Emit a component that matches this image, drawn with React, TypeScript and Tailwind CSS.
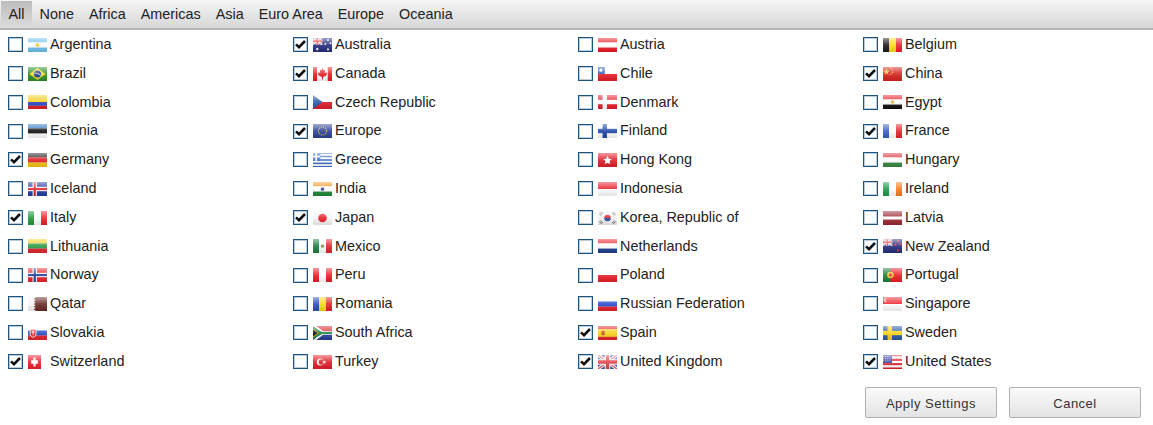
import { type ReactNode } from 'react'

const tabs = ['All', 'None', 'Africa', 'Americas', 'Asia', 'Euro Area', 'Europe', 'Oceania']

// horizontal stripes
const H = (...c: string[]) =>
  c.map((f, i) => <rect key={i} x="0" y={(i * 14) / c.length} width="19" height={14 / c.length + 0.1} fill={f} />)

// vertical stripes
const V = (...c: string[]) =>
  c.map((f, i) => <rect key={i} x={(i * 19) / c.length} y="0" width={19 / c.length + 0.1} height="14" fill={f} />)

const Nordic = (bg: string, cross: string, inner?: string) => (
  <>
    <rect width="19" height="14" fill={bg} />
    <rect x="5" width="4" height="14" fill={cross} />
    <rect y="5" width="19" height="4" fill={cross} />
    {inner && <rect x="6" width="2" height="14" fill={inner} />}
    {inner && <rect y="6" width="19" height="2" fill={inner} />}
  </>
)

const UnionCanton = (w: number, h: number) => (
  <svg x="0" y="0" width={w} height={h} viewBox="0 0 19 14">
    <rect width="19" height="14" fill="#3f50a8" />
    <path d="M0 0L19 14M19 0L0 14" stroke="#fff" strokeWidth="3" />
    <path d="M0 0L19 14M19 0L0 14" stroke="#e4565c" strokeWidth="1" />
    <path d="M9.5 0V14M0 7H19" stroke="#fff" strokeWidth="5" />
    <path d="M9.5 0V14M0 7H19" stroke="#e4464c" strokeWidth="3" />
  </svg>
)

const countries: { name: string; checked?: boolean; width?: number; flag: ReactNode }[] = [
  { name: 'Argentina', flag: <>{H('#6fc0ee', '#fff', '#6fc0ee')}<circle cx="9.5" cy="7" r="1.8" fill="#f2cf4a" /></> },
  { name: 'Australia', checked: true, flag: <><rect width="19" height="14" fill="#27307f" />{UnionCanton(9.5, 7)}<g fill="#e9e9f2"><circle cx="4.7" cy="10.7" r="1.2" /><circle cx="14.5" cy="2.5" r=".9" /><circle cx="12" cy="6" r=".9" /><circle cx="16.7" cy="5.5" r=".9" /><circle cx="14.5" cy="11" r="1" /></g></> },
  { name: 'Austria', flag: H('#ee1c25', '#fff', '#ee1c25') },
  { name: 'Belgium', flag: V('#1c1c1c', '#fbdc1b', '#ee2230') },
  { name: 'Brazil', flag: <><rect width="19" height="14" fill="#2f8f2a" /><path d="M9.5 1.5L17 7L9.5 12.5L2 7Z" fill="#f2da2c" /><circle cx="9.5" cy="7" r="3.2" fill="#26418f" /><path d="M6.5 6.2Q9.5 6 12.4 8" stroke="#fff" strokeWidth=".7" fill="none" /></> },
  { name: 'Canada', checked: true, flag: <>{V('#ec1c24', '#fff', '#fff', '#ec1c24')}<path d="M9.5 1.5L10.6 3.8L12 3.2L11.5 6.2L13.3 5.3L13.6 7.3L12.3 8.9L10 9.8V12H9V9.8L6.7 8.9L5.4 7.3L5.7 5.3L7.5 6.2L7 3.2L8.4 3.8Z" fill="#e3232b" /></> },
  { name: 'Chile', flag: <>{H('#fff', '#ea2029')}<rect width="7" height="7" fill="#2a5fbf" /><circle cx="3.5" cy="3.5" r="1.4" fill="#fff" /></> },
  { name: 'China', checked: true, flag: <><rect width="19" height="14" fill="#d8241f" /><path d="M4 1.8L4.8 4L7 4.1L5.3 5.4L5.9 7.5L4 6.3L2.1 7.5L2.7 5.4L1 4.1L3.2 4Z" fill="#f5c93a" /><g fill="#f5c93a"><circle cx="8" cy="1.8" r=".6" /><circle cx="9.5" cy="3.4" r=".6" /><circle cx="9.5" cy="5.6" r=".6" /><circle cx="8" cy="7.2" r=".6" /></g></> },
  { name: 'Colombia', flag: <><rect width="19" height="7" fill="#f8cf1e" /><rect y="7" width="19" height="3.5" fill="#2d46c4" /><rect y="10.5" width="19" height="3.5" fill="#e01f2b" /></> },
  { name: 'Czech Republic', flag: <>{H('#fff', '#e0202b')}<path d="M0 0L9.5 7L0 14Z" fill="#2a5ca8" /></> },
  { name: 'Denmark', flag: Nordic('#e8202e', '#fff') },
  { name: 'Egypt', flag: <>{H('#e8222c', '#fff', '#111')}<circle cx="9.5" cy="7" r="1.5" fill="#d9b23c" /></> },
  { name: 'Estonia', flag: H('#2f78c4', '#111', '#fff') },
  { name: 'Europe', checked: true, flag: <><rect width="19" height="14" fill="#2f4499" /><circle cx="9.5" cy="7" r="3.7" fill="none" stroke="#e6c93a" strokeWidth="1" strokeDasharray="1 .95" /></> },
  { name: 'Finland', flag: Nordic('#fff', '#1f49a8') },
  { name: 'France', checked: true, flag: V('#3a63c4', '#fff', '#e8272f') },
  { name: 'Germany', checked: true, flag: H('#222', '#e21d24', '#f5c518') },
  { name: 'Greece', flag: <>{H('#3f6fc9', '#fff', '#3f6fc9', '#fff', '#3f6fc9', '#fff', '#3f6fc9', '#fff', '#3f6fc9')}<rect width="7.5" height="7.8" fill="#3f6fc9" /><rect x="3" width="1.5" height="7.8" fill="#fff" /><rect y="3.1" width="7.5" height="1.5" fill="#fff" /></> },
  { name: 'Hong Kong', flag: <><rect width="19" height="14" fill="#e0202c" /><path d="M9.5 3.2L10.7 5.8L13.5 6.1L11.4 8L12 10.8L9.5 9.4L7 10.8L7.6 8L5.5 6.1L8.3 5.8Z" fill="#fff" /></> },
  { name: 'Hungary', flag: H('#d8323a', '#fff', '#3a8a45') },
  { name: 'Iceland', flag: Nordic('#23409f', '#fff', '#e02a33') },
  { name: 'India', flag: <>{H('#f59a2e', '#fff', '#1f8a3b')}<circle cx="9.5" cy="7" r="1.7" fill="#3a4a9c" /></> },
  { name: 'Indonesia', flag: H('#e4242c', '#fff') },
  { name: 'Ireland', flag: V('#1f9a4b', '#fff', '#f57e28') },
  { name: 'Italy', checked: true, flag: V('#1f9a40', '#fff', '#e9242c') },
  { name: 'Japan', checked: true, flag: <><rect width="19" height="14" fill="#f5f5f5" /><circle cx="9.5" cy="7" r="3.9" fill="#e8202a" /></> },
  { name: 'Korea, Republic of', flag: <><rect width="19" height="14" fill="#f3f3f3" /><path d="M6.5 7A3 3 0 0 1 12.5 7Z" fill="#d9252e" /><path d="M6.5 7A3 3 0 0 0 12.5 7Z" fill="#2a4d9c" /><path d="M2 3.5L4.5 1.5M2.8 4.6L5.3 2.6M14.5 1.5L17 3.5M13.7 2.6L16.2 4.6M2 10.5L4.5 12.5M2.8 9.4L5.3 11.4M14.5 12.5L17 10.5M13.7 11.4L16.2 9.4" stroke="#555" strokeWidth=".7" /></> },
  { name: 'Latvia', flag: <><rect width="19" height="14" fill="#9c2a36" /><rect y="5.6" width="19" height="2.8" fill="#fff" /></> },
  { name: 'Lithuania', flag: H('#f7d31e', '#2f9a45', '#e0262e') },
  { name: 'Mexico', flag: <>{V('#1f7f45', '#fff', '#e0262e')}<circle cx="9.5" cy="7" r="1.7" fill="#a08a5a" /></> },
  { name: 'Netherlands', flag: H('#e8252e', '#fff', '#23408f') },
  { name: 'New Zealand', checked: true, flag: <><rect width="19" height="14" fill="#262f7f" />{UnionCanton(9.5, 7)}<g fill="#e2303a"><circle cx="14.5" cy="2.6" r="1" /><circle cx="12.2" cy="6" r="1" /><circle cx="16.6" cy="5.5" r="1" /><circle cx="14.5" cy="11" r="1.1" /></g></> },
  { name: 'Norway', flag: Nordic('#e8262f', '#fff', '#23409f') },
  { name: 'Peru', flag: V('#ee2029', '#fff', '#ee2029') },
  { name: 'Poland', flag: H('#fff', '#e8232c') },
  { name: 'Portugal', flag: <><rect width="19" height="14" fill="#ee2029" /><rect width="7.6" height="14" fill="#1f8038" /><circle cx="7.6" cy="7" r="3" fill="#eec93a" /><circle cx="7.6" cy="7" r="1.5" fill="#e03a35" /></> },
  { name: 'Qatar', flag: <><rect width="19" height="14" fill="#6a2d26" /><path d="M0 0H6L8 1.2L6 2.3L8 3.5L6 4.7L8 5.8L6 7L8 8.2L6 9.3L8 10.5L6 11.7L8 12.8L6 14H0Z" fill="#f7f5f5" /></> },
  { name: 'Romania', flag: V('#2b4fc0', '#fcd81f', '#e4242c') },
  { name: 'Russian Federation', flag: H('#fff', '#2a4fd0', '#e8232c') },
  { name: 'Singapore', flag: <>{H('#ea2730', '#fff')}<circle cx="4" cy="3.5" r="2" fill="#fff" /><circle cx="4.9" cy="3.5" r="1.9" fill="#ea2730" /></> },
  { name: 'Slovakia', flag: <>{H('#fff', '#2a4dc0', '#e6242c')}<path d="M2.8 3.5H8.2V8Q8.2 10.3 5.5 11Q2.8 10.3 2.8 8Z" fill="#e6242c" stroke="#fff" strokeWidth=".8" /><path d="M5.5 4.5V9M4.2 6H6.8" stroke="#fff" strokeWidth=".8" /></> },
  { name: 'South Africa', flag: <>{H('#e0252c', '#e0252c', '#2b3f99', '#2b3f99')}<path d="M0 0L8.5 7L0 14Z" fill="#111" /><path d="M0 0H3L10 5.4H19V8.6H10L3 14H0L8.5 7Z" fill="#fff" /><path d="M0 1.1L9.3 6H19V8H9.3L0 12.9V11L6.6 7L0 3Z" fill="#1c8a48" /><path d="M0 3L5.8 7L0 11Z" fill="#111" stroke="#eec22f" strokeWidth=".8" /></> },
  { name: 'Spain', checked: true, flag: <>{H('#e8232c', '#f8d21e', '#f8d21e', '#e8232c')}<rect x="4" y="5" width="3" height="4" fill="#c4552d" /></> },
  { name: 'Sweden', flag: Nordic('#2c5aa8', '#f8d21e') },
  { name: 'Switzerland', checked: true, width: 13, flag: <><rect width="19" height="14" fill="#ee2029" /><path d="M8 3H11V5.5H14V8.5H11V11H8V8.5H5V5.5H8Z" fill="#fff" /></> },
  { name: 'Turkey', flag: <><rect width="19" height="14" fill="#e4202a" /><circle cx="7.5" cy="7" r="3.2" fill="#fff" /><circle cx="8.5" cy="7" r="2.5" fill="#e4202a" /><path d="M11 5.3L11.5 6.6L12.9 6.5L11.9 7.4L12.4 8.7L11 8L9.8 8.7L10.2 7.4L9.2 6.5L10.6 6.6Z" fill="#fff" /></> },
  { name: 'United Kingdom', checked: true, flag: UnionCanton(19, 14) },
  { name: 'United States', checked: true, flag: <>{H('#e4252e', '#fff', '#e4252e', '#fff', '#e4252e', '#fff', '#e4252e')}<rect width="9" height="8" fill="#3c479f" /><path d="M1 2H8M1 4H8M1 6H8" stroke="#c4c9ee" strokeWidth=".8" strokeDasharray=".8 .9" /></> },
]

function Flag({ children, width = 19 }: { children: ReactNode; width?: number }) {
  return (
    <span className="relative block w-[19px] h-[14px] shrink-0">
      <span className={width === 19 ? 'relative block w-[19px] h-[14px] overflow-hidden' : 'relative block w-[13px] h-[14px] overflow-hidden'}>
        <svg width={width} height="14" viewBox="0 0 19 14" preserveAspectRatio="none" className="block blur-[0.6px] scale-110">
          {children}
        </svg>
        <span className="absolute inset-0 bg-gradient-to-b from-white/55 via-white/10 to-black/10" />
      </span>
    </span>
  )
}

function Checkbox({ checked }: { checked?: boolean }) {
  return (
    <span className="w-[15px] h-[15px] shrink-0 flex items-center justify-center border border-[#1d5480] shadow-[inset_0_0_0_1px_rgba(29,84,128,0.3)] bg-white">
      {checked && (
        <svg width="11" height="9" viewBox="0 0 11 9">
          <path d="M1 4.4L4 7.2L10 1" fill="none" stroke="#111" strokeWidth="2.6" />
        </svg>
      )}
    </span>
  )
}

export default function App() {
  return (
    <div className="w-[1153px] h-[425px] bg-white text-[#222] text-[14.4px] font-['Liberation_Sans',Arial,sans-serif] overflow-hidden">
      <div className="h-[30px] flex pl-px pt-px bg-gradient-to-b from-[#f6f6f6] to-[#d6d6d6] border-b-2 border-[#b4b4b4]">
        {tabs.map((t) => (
          <div
            key={t}
            className={
              t === 'All'
                ? 'px-[7.5px] flex items-center bg-gradient-to-b from-[#bdbdbd] to-[#dcdcdc]'
                : 'px-[7.5px] flex items-center'
            }
          >
            {t}
          </div>
        ))}
      </div>

      <div className="grid grid-cols-[repeat(4,285px)] auto-rows-[28.8px] pl-2 pt-[0.4px]">
        {countries.map((c) => (
          <label key={c.name} className="flex items-center">
            <Checkbox checked={c.checked} />
            <span className="ml-[5px]">
              <Flag width={c.width}>{c.flag}</Flag>
            </span>
            <span className="ml-[3px]">{c.name}</span>
          </label>
        ))}
      </div>

      <div className="flex justify-end gap-3 pt-[10.6px] pr-3">
        <button className="w-[132px] h-[31px] pt-1 rounded-[2px] border border-[#b0b0b0] bg-gradient-to-b from-[#fafafa] to-[#e4e4e4] text-[13px] tracking-[0.5px] text-[#333]">
          Apply Settings
        </button>
        <button className="w-[132px] h-[31px] pt-1 rounded-[2px] border border-[#b0b0b0] bg-gradient-to-b from-[#fafafa] to-[#e4e4e4] text-[13px] tracking-[0.5px] text-[#333]">
          Cancel
        </button>
      </div>
    </div>
  )
}
